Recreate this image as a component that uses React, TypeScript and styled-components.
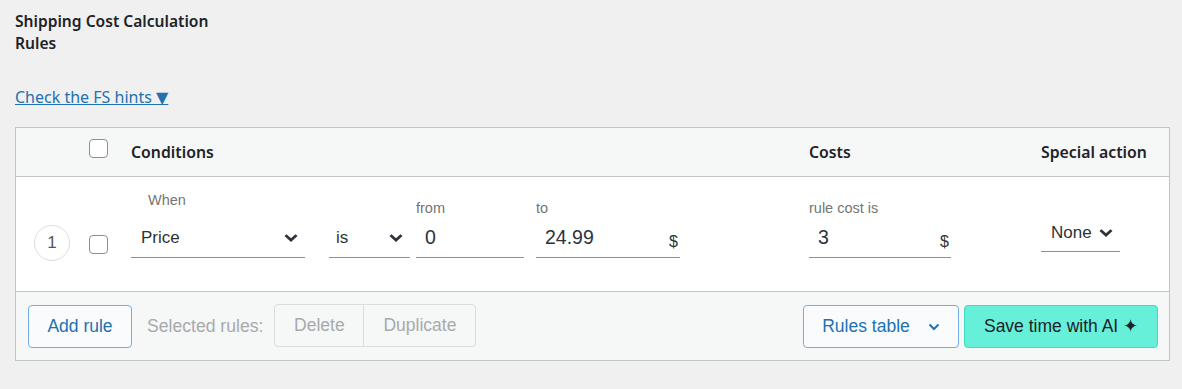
import styled, { createGlobalStyle } from 'styled-components';

const GlobalStyle = createGlobalStyle`
  html, body {
    margin: 0;
    padding: 0;
    background: #f0f0f1;
  }
  body {
    font-family: "Liberation Sans", Arial, sans-serif;
    color: #2c3338;
  }
`;

const Page = styled.div`
  width: 1182px;
  height: 389px;
  padding: 10px 12px 0 15px;
  box-sizing: border-box;
  overflow: hidden;
`;

const Title = styled.h2`
  margin: 0;
  width: 210px;
  font-family: "Noto Sans", sans-serif;
  font-size: 15.6px;
  font-weight: 600;
  line-height: 22px;
  color: #1d2327;
`;

const HintLink = styled.a`
  display: inline-block;
  margin-top: 33px;
  font-family: "Noto Sans", sans-serif;
  font-size: 16px;
  line-height: 21px;
  color: #2271b1;
  text-decoration: underline;
  cursor: pointer;
`;

const HintArrow = styled.span`
  font-family: "DejaVu Sans", sans-serif;
  font-size: 16px;
`;

const Table = styled.div`
  margin-top: 19px;
  width: 1155px;
  border: 1px solid #c3c4c7;
  box-sizing: border-box;
  background: #fff;
`;

const Grid = styled.div`
  display: grid;
  grid-template-columns: 73px 42px 678px 232px 1fr;
`;

const HeadRow = styled(Grid)`
  height: 49px;
  box-sizing: border-box;
  align-items: center;
  background: #f6f7f7;
  border-bottom: 1px solid #c3c4c7;
`;

const HeadCell = styled.div`
  font-family: "Noto Sans", sans-serif;
  font-size: 15.8px;
  font-weight: 600;
  color: #1d2327;
`;

const BodyRow = styled(Grid)`
  height: 114px;
  align-items: end;
`;

const Cell = styled.div<{ $bottom: number }>`
  margin-bottom: ${({ $bottom }) => $bottom}px;
  display: flex;
  align-items: flex-end;
`;

const IndexBadge = styled.div`
  width: 36px;
  height: 36px;
  margin-left: 18px;
  border: 1px solid #dcdcde;
  border-radius: 50%;
  box-sizing: border-box;
  display: flex;
  align-items: center;
  justify-content: center;
  font-size: 17px;
  color: #50575e;
`;

const Checkbox = styled.span`
  display: block;
  width: 19px;
  height: 19px;
  border: 1px solid #8c8f94;
  border-radius: 4px;
  box-sizing: border-box;
  background: #fff;
`;

const HeadCheck = styled(Checkbox)`
  margin-top: -7px;
`;

const Field = styled.div<{ $width: number; $gap?: number }>`
  width: ${({ $width }) => $width}px;
  margin-right: ${({ $gap }) => $gap ?? 0}px;
  display: flex;
  flex-direction: column;
`;

const Label = styled.span<{ $indent?: number; $space?: number }>`
  font-size: 14.5px;
  line-height: 16px;
  color: #757575;
  padding-left: ${({ $indent }) => $indent ?? 0}px;
  margin-bottom: ${({ $space }) => $space ?? 2}px;
`;

const Control = styled.div<{ $pad: number; $height?: number; $size?: number }>`
  height: ${({ $height }) => $height ?? 40}px;
  box-sizing: border-box;
  border-bottom: 1px solid #8c8f94;
  padding: 0 7px 0 ${({ $pad }) => $pad}px;
  display: flex;
  align-items: center;
  justify-content: space-between;
  font-size: ${({ $size }) => $size ?? 17}px;
  color: #2c3338;
`;

const Currency = styled.span`
  font-size: 16px;
  color: #2c3338;
  margin-top: 8px;
  margin-right: -5px;
`;

const Caret = () => (
  <svg width="14" height="8" viewBox="0 0 14 8">
    <path d="M0.5 2 L7 8 L13.5 2 L11.5 0.3 L7 4.3 L2.5 0.3 Z" fill="#2c3338" />
  </svg>
);

const Footer = styled.div`
  height: 69px;
  border-top: 1px solid #c3c4c7;
  background: #f6f7f7;
  box-sizing: border-box;
  padding: 0 11px 0 12px;
  display: flex;
  align-items: center;
`;

const OutlineButton = styled.button<{ $width: number }>`
  width: ${({ $width }) => $width}px;
  height: 43px;
  border: 1px solid #72aee6;
  border-radius: 4px;
  background: #f9fbfd;
  color: #2271b1;
  font-family: "Liberation Sans", Arial, sans-serif;
  font-size: 17.5px;
  display: flex;
  align-items: center;
  justify-content: center;
  gap: 18px;
  padding: 0;
  margin-top: 1px;
`;

const Muted = styled.span`
  margin-left: 15px;
  font-size: 17.6px;
  color: #a7aaad;
`;

const ButtonGroup = styled.div`
  margin-left: 11px;
  display: flex;
  height: 43px;
  border: 1px solid #dcdcde;
  border-radius: 4px;
  box-sizing: border-box;
  margin-top: -1px;
`;

const GroupButton = styled.span<{ $width: number }>`
  width: ${({ $width }) => $width}px;
  display: flex;
  align-items: center;
  justify-content: center;
  font-size: 17.5px;
  color: #a7aaad;
  & + & {
    border-left: 1px solid #dcdcde;
  }
`;

const Spacer = styled.div`
  flex: 1;
`;

const AiButton = styled.button`
  margin-left: 5px;
  width: 194px;
  height: 43px;
  border: 1px solid #3ddcc2;
  border-radius: 4px;
  background: #66efd9;
  color: #1d2327;
  font-family: "Liberation Sans", Arial, sans-serif;
  font-size: 17.5px;
  padding: 0;
`;

export default function App() {
  return (
    <>
      <GlobalStyle />
      <Page>
        <Title>Shipping Cost Calculation Rules</Title>
        <HintLink>
          Check the FS hints <HintArrow>▼</HintArrow>
        </HintLink>
        <Table>
          <HeadRow>
            <div />
            <HeadCheck />
            <HeadCell>Conditions</HeadCell>
            <HeadCell>Costs</HeadCell>
            <HeadCell>Special action</HeadCell>
          </HeadRow>
          <BodyRow>
            <Cell $bottom={30}>
              <IndexBadge>1</IndexBadge>
            </Cell>
            <Cell $bottom={37}>
              <Checkbox />
            </Cell>
            <Cell $bottom={33}>
              <Field $width={174} $gap={24}>
                <Label $indent={17} $space={10}>When</Label>
                <Control $pad={10}>
                  Price <Caret />
                </Control>
              </Field>
              <Field $width={81} $gap={6}>
                <Control $pad={7}>
                  is <Caret />
                </Control>
              </Field>
              <Field $width={108} $gap={12}>
                <Label>from</Label>
                <Control $pad={9} $size={19.5}>0</Control>
              </Field>
              <Field $width={144}>
                <Label>to</Label>
                <Control $pad={9} $size={19.5}>
                  24.99 <Currency>$</Currency>
                </Control>
              </Field>
            </Cell>
            <Cell $bottom={33}>
              <Field $width={142}>
                <Label>rule cost is</Label>
                <Control $pad={9} $size={19.5}>
                  3 <Currency>$</Currency>
                </Control>
              </Field>
            </Cell>
            <Cell $bottom={39}>
              <Field $width={79}>
                <Control $pad={10} $height={38}>
                  None <Caret />
                </Control>
              </Field>
            </Cell>
          </BodyRow>
          <Footer>
            <OutlineButton $width={104}>Add rule</OutlineButton>
            <Muted>Selected rules:</Muted>
            <ButtonGroup>
              <GroupButton $width={88}>Delete</GroupButton>
              <GroupButton $width={111}>Duplicate</GroupButton>
            </ButtonGroup>
            <Spacer />
            <OutlineButton $width={156}>
              Rules table
              <svg width="12" height="8" viewBox="0 0 12 8">
                <path d="M1.5 1.5 L6 6 L10.5 1.5" fill="none" stroke="#2271b1" strokeWidth="2" />
              </svg>
            </OutlineButton>
            <AiButton>Save time with AI ✦</AiButton>
          </Footer>
        </Table>
      </Page>
    </>
  );
}
